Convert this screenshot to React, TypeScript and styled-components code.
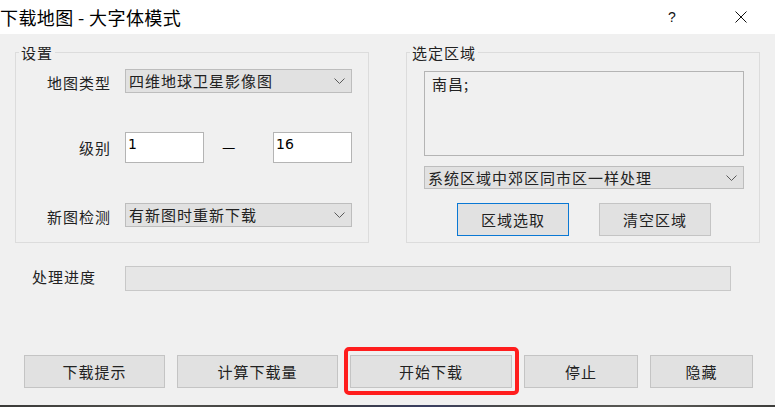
import React from 'react';
import styled, { createGlobalStyle } from 'styled-components';

const FONT = `"Noto Sans CJK SC", "Noto Sans", sans-serif`;

const GlobalStyle = createGlobalStyle`
  html, body {
    margin: 0;
    padding: 0;
    background: #f0f0f0;
  }
  body {
    font-family: ${FONT};
  }
  * {
    box-sizing: border-box;
  }
`;

const Window = styled.div`
  width: 775px;
  height: 407px;
  display: flex;
  flex-direction: column;
  background: #f0f0f0;
  overflow: hidden;
`;

const TitleBar = styled.div`
  height: 34px;
  flex: none;
  background: #ffffff;
  display: flex;
  align-items: center;
  padding-right: 11px;
`;

const Title = styled.div`
  flex: 1;
  font-size: 18px;
  line-height: 1;
  letter-spacing: 0.4px;
  color: #000;
  padding-bottom: 1px;
`;

const CaptionButton = styled.div`
  width: 46px;
  height: 34px;
  display: flex;
  align-items: center;
  justify-content: center;
  font-family: 'Liberation Sans', sans-serif;
  font-size: 14px;
  color: #111;
  & + & {
    margin-left: 23px;
  }
`;

const Body = styled.div`
  flex: 1;
  display: flex;
  flex-direction: column;
  padding: 11px 15px 0;
`;

const GroupRow = styled.div`
  display: flex;
  gap: 37px;
  align-items: stretch;
`;

const Group = styled.fieldset`
  flex: 1;
  min-width: 0;
  margin: 0;
  padding: 0;
  border: 1px solid #dcdcdc;
`;

const Legend = styled.legend`
  font-size: 15px;
  line-height: 15px;
  letter-spacing: 1px;
  color: #222;
  padding: 0 2px;
  margin-left: 3px;
`;

const SettingsGrid = styled.div`
  display: grid;
  grid-template-columns: 94px 227px;
  column-gap: 15px;
  row-gap: 39px;
  align-items: center;
  padding-top: 8px;
`;

const FieldLabel = styled.div<{ $drop?: number }>`
  text-align: right;
  font-size: 15px;
  letter-spacing: 1px;
  margin-right: -1px;
  color: #222;
  padding-top: ${(p) => p.$drop ?? 0}px;
`;

const Combo = styled.div<{ $h: number }>`
  height: ${(p) => p.$h}px;
  display: flex;
  align-items: center;
  justify-content: space-between;
  padding: 0 6px 0 3px;
  background: #e1e1e1;
  border: 1px solid #bdbdbd;
  font-size: 15px;
  letter-spacing: 1px;
  color: #222;
  white-space: nowrap;
`;

const LevelRow = styled.div`
  display: flex;
  align-items: center;
`;

const TextBox = styled.div`
  width: 79px;
  height: 31px;
  background: #ffffff;
  border: 1px solid #b4b4b4;
  padding: 3px 2px 0;
  font-family: 'DejaVu Sans', sans-serif;
  font-size: 14px;
  line-height: 16px;
  color: #000;
`;

const Dash = styled.div`
  margin: 0 auto 3px 18px;
  font-size: 15px;
  line-height: 1;
  color: #000;
`;

const AreaContent = styled.div`
  display: flex;
  flex-direction: column;
  padding: 11px 15px 6px 17px;
`;

const AreaBox = styled.div`
  height: 85px;
  border: 1px solid #b4b4b4;
  background: #f0f0f0;
  padding: 3px 7px;
  font-size: 15px;
  line-height: 18px;
  letter-spacing: 1px;
  color: #222;
  margin-bottom: 10px;
`;

const AreaButtons = styled.div`
  display: flex;
  justify-content: center;
  gap: 30px;
  margin-top: 14px;
`;

const Button = styled.button<{ $w: number; $focused?: boolean }>`
  width: ${(p) => p.$w}px;
  height: 33px;
  padding: 0;
  margin: 0;
  background: #e1e1e1;
  border: 1px solid ${(p) => (p.$focused ? '#0a78d4' : '#c4c4c4')};
  font-family: ${FONT};
  font-size: 15px;
  letter-spacing: 1px;
  color: #222;
  display: flex;
  align-items: center;
  justify-content: center;
`;

const ProgressRow = styled.div`
  display: flex;
  align-items: center;
  margin-top: 23px;
  padding: 0 29px 0 17px;
`;

const ProgressLabel = styled.div`
  width: 93px;
  font-size: 15px;
  letter-spacing: 1px;
  color: #222;
  padding-bottom: 4px;
`;

const ProgressBar = styled.div`
  flex: 1;
  height: 25px;
  background: #e6e6e6;
  border: 1px solid #c8c8c8;
`;

const ButtonRow = styled.div`
  display: flex;
  gap: 12px;
  margin-top: auto;
  margin-bottom: 17px;
  padding-left: 9px;
`;

const Highlight = styled.span`
  position: relative;
  display: flex;
  &::after {
    content: '';
    position: absolute;
    top: -8px;
    left: -6px;
    right: -7px;
    bottom: -7px;
    border: 4px solid #ff1d1d;
    border-radius: 5px;
    pointer-events: none;
  }
`;

const BottomStrip = styled.div`
  height: 2px;
  flex: none;
  background: linear-gradient(
    90deg,
    #3a3a38 0%,
    #52524e 20%,
    #3c3c3a 40%,
    #3a3f62 55%,
    #4a4a48 65%,
    #5a5a56 85%,
    #3d3d3b 100%
  );
`;

const Chevron = () => (
  <svg width="11" height="6" viewBox="0 0 11 6" fill="none">
    <polyline points="0.5,0.5 5.5,5.5 10.5,0.5" stroke="#5a5a5a" strokeWidth="1" />
  </svg>
);

const CloseIcon = () => (
  <svg width="12" height="12" viewBox="0 0 12 12" fill="none">
    <path d="M0.5 0.5 L11.5 11.5 M11.5 0.5 L0.5 11.5" stroke="#111" strokeWidth="1" />
  </svg>
);

export default function App() {
  return (
    <Window>
      <GlobalStyle />
      <TitleBar>
        <Title>下载地图 - 大字体模式</Title>
        <CaptionButton>?</CaptionButton>
        <CaptionButton>
          <CloseIcon />
        </CaptionButton>
      </TitleBar>

      <Body>
        <GroupRow>
          <Group>
            <Legend>设置</Legend>
            <SettingsGrid>
              <FieldLabel $drop={4}>地图类型</FieldLabel>
              <Combo $h={24}>
                四维地球卫星影像图
                <Chevron />
              </Combo>

              <FieldLabel>级别</FieldLabel>
              <LevelRow>
                <TextBox>1</TextBox>
                <Dash>—</Dash>
                <TextBox>16</TextBox>
              </LevelRow>

              <FieldLabel $drop={4}>新图检测</FieldLabel>
              <Combo $h={24}>
                有新图时重新下载
                <Chevron />
              </Combo>
            </SettingsGrid>
          </Group>

          <Group>
            <Legend>选定区域</Legend>
            <AreaContent>
              <AreaBox>南昌;</AreaBox>
              <Combo $h={23}>
                系统区域中郊区同市区一样处理
                <Chevron />
              </Combo>
              <AreaButtons>
                <Button $w={112} $focused>
                  区域选取
                </Button>
                <Button $w={112}>清空区域</Button>
              </AreaButtons>
            </AreaContent>
          </Group>
        </GroupRow>

        <ProgressRow>
          <ProgressLabel>处理进度</ProgressLabel>
          <ProgressBar />
        </ProgressRow>

        <ButtonRow>
          <Button $w={141}>下载提示</Button>
          <Button $w={161}>计算下载量</Button>
          <Highlight>
            <Button $w={162}>开始下载</Button>
          </Highlight>
          <Button $w={114}>停止</Button>
          <Button $w={103}>隐藏</Button>
        </ButtonRow>
      </Body>
      <BottomStrip />
    </Window>
  );
}
